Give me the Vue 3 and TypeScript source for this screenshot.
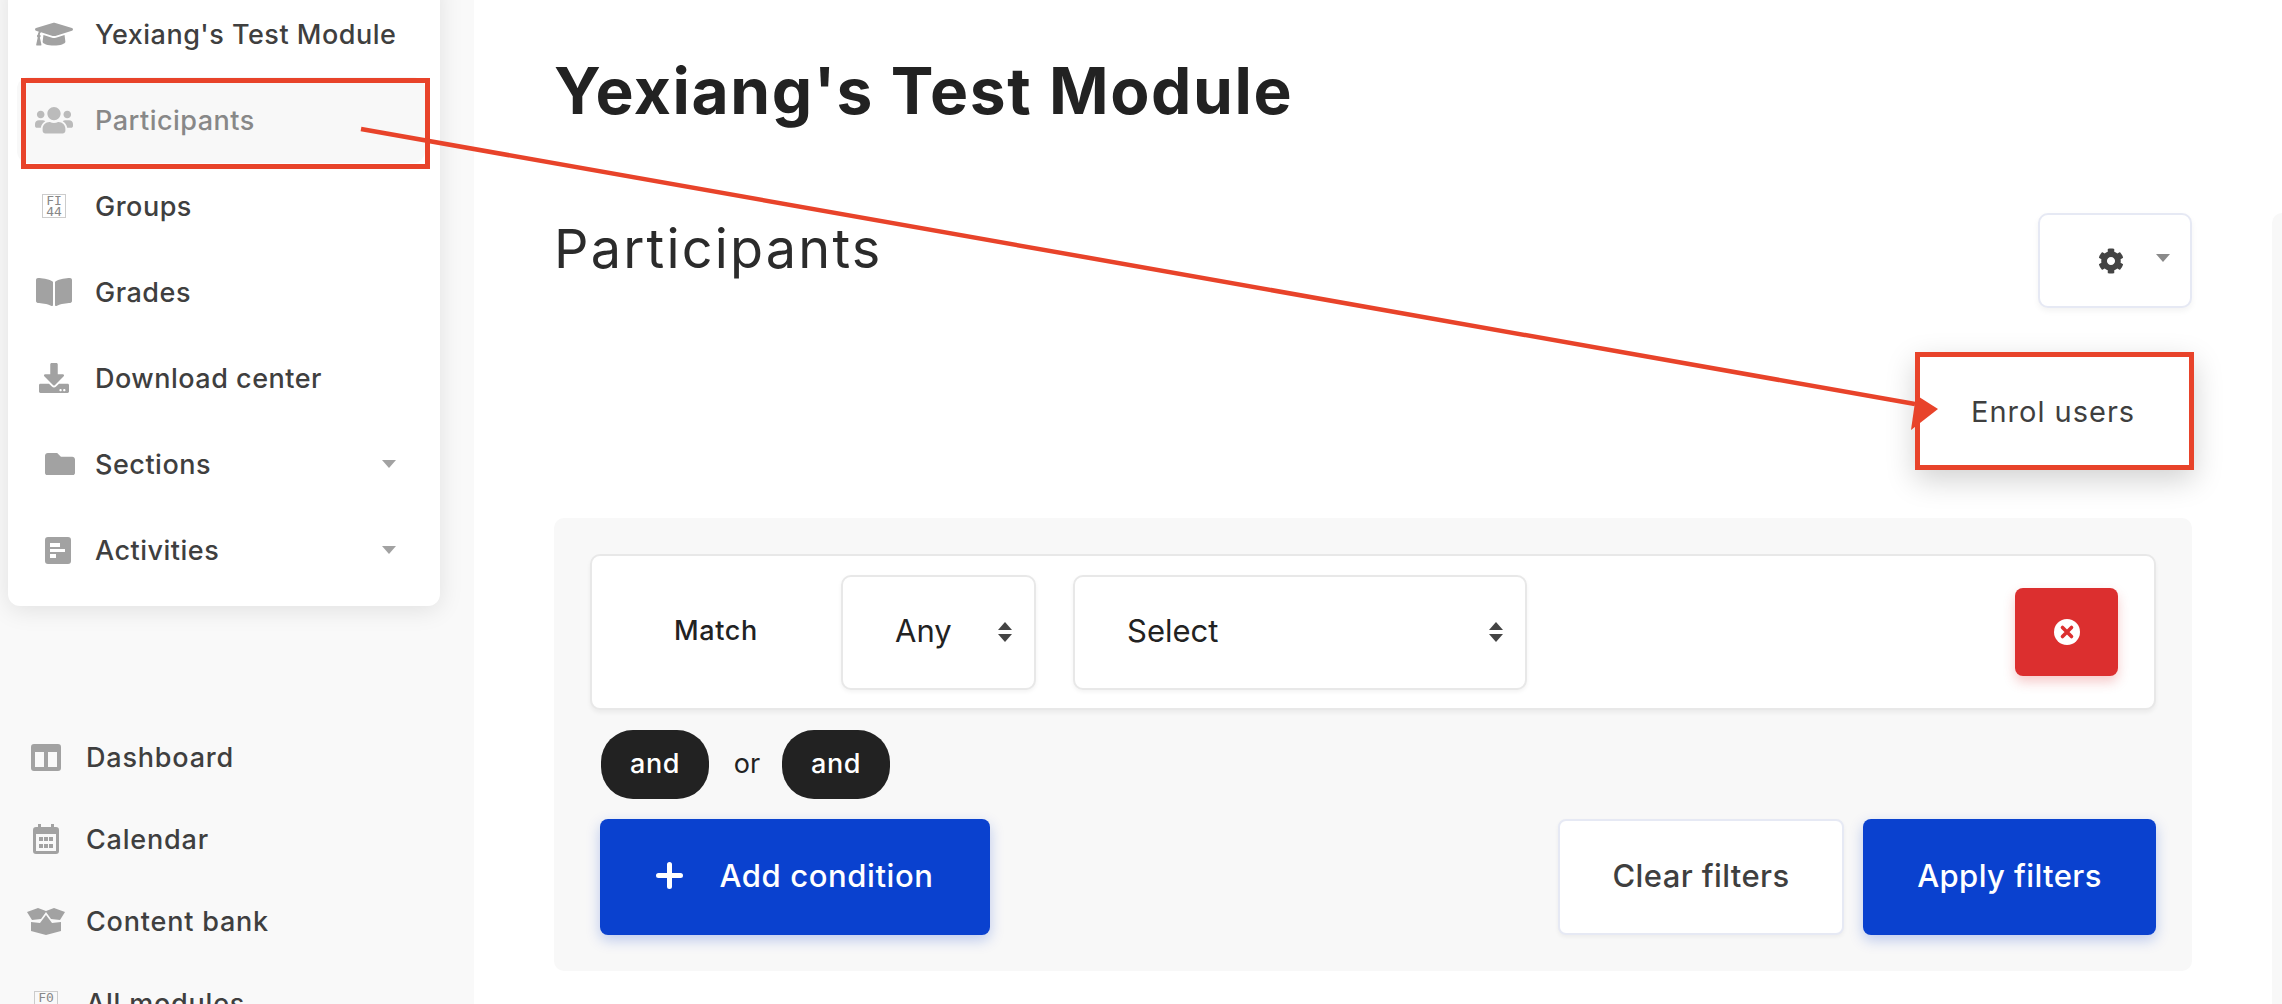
<script setup lang="ts">
interface IconDef { box: string; w: number; d: string }
interface NavItem { label: string; svg?: IconDef; tag?: string[]; offset?: boolean; caret?: boolean; active?: boolean }
const cap: IconDef = { box: '0 0 640 512', w: 38, d: 'M622.34 153.2L343.4 67.5c-15.2-4.67-31.6-4.67-46.79 0L17.66 153.2c-23.54 7.23-23.54 38.36 0 45.59l48.63 14.94c-10.67 13.19-17.23 29.28-17.88 46.9C38.78 266.15 32 276.11 32 288c0 10.78 5.68 19.85 13.86 25.65L20.33 428.53C18.11 438.52 25.71 448 35.94 448h56.11c10.24 0 17.84-9.48 15.62-19.47L82.14 313.65C90.32 307.85 96 298.78 96 288c0-11.57-6.47-21.25-15.66-26.87.76-15.02 8.44-28.3 20.69-36.72L296.6 284.5c9.06 2.78 26.44 6.25 46.79 0l278.95-85.7c23.55-7.24 23.55-38.36 0-45.6zM352.79 315.09c-28.53 8.76-52.84 3.92-65.59 0l-145.02-44.55L128 384c0 35.35 85.96 64 192 64s192-28.65 192-64l-14.18-113.47-145.03 44.56z' }
const users: IconDef = { box: '0 0 640 512', w: 38, d: 'M96 224c35.3 0 64-28.7 64-64s-28.7-64-64-64-64 28.7-64 64 28.7 64 64 64zm448 0c35.3 0 64-28.7 64-64s-28.7-64-64-64-64 28.7-64 64 28.7 64 64 64zm32 32h-64c-17.6 0-33.5 7.1-45.1 18.6 40.3 22.1 68.9 62 75.1 109.4h66c17.7 0 32-14.3 32-32v-32c0-35.3-28.7-64-64-64zm-256 0c61.9 0 112-50.1 112-112S381.9 32 320 32 208 82.1 208 144s50.1 112 112 112zm76.8 32h-8.3c-20.8 10-43.9 16-68.5 16s-47.6-6-68.5-16h-8.3C179.6 288 128 339.6 128 403.2V432c0 26.5 21.5 48 48 48h288c26.5 0 48-21.5 48-48v-28.8c0-63.6-51.6-115.2-115.2-115.2zm-223.7-13.4C161.5 263.1 145.6 256 128 256H64c-35.3 0-64 28.7-64 64v32c0 17.7 14.3 32 32 32h65.9c6.3-47.4 34.9-87.3 75.2-109.4z' }
const book: IconDef = { box: '0 0 576 512', w: 36, d: 'M542.22 32.05c-54.8 3.11-163.72 14.43-230.96 55.59-4.64 2.84-7.27 7.89-7.27 13.17v363.87c0 11.55 12.63 18.85 23.28 13.49 69.18-34.82 169.23-44.32 218.7-46.92 16.89-.89 30.02-14.43 30.02-30.66V62.75c.01-17.71-15.35-31.74-33.77-30.7zM264.73 87.64C197.5 46.48 88.58 35.17 33.78 32.05 15.36 31.01 0 45.04 0 62.75V400.6c0 16.24 13.13 29.78 30.02 30.66 49.49 2.6 149.59 12.11 218.77 46.95 10.62 5.35 23.21-1.94 23.21-13.46V100.63c0-5.29-2.62-10.25-7.27-12.99z' }
const download: IconDef = { box: '0 0 512 512', w: 30, d: 'M216 0h80c13.3 0 24 10.7 24 24v168h87.7c17.8 0 26.7 21.5 14.1 34.1L269.7 378.3c-7.5 7.5-19.8 7.5-27.3 0L90.1 226.1c-12.6-12.6-3.7-34.1 14.1-34.1H192V24c0-13.3 10.7-24 24-24zm296 376v112c0 13.3-10.7 24-24 24H24c-13.3 0-24-10.7-24-24V376c0-13.3 10.7-24 24-24h146.7l49 49c20.1 20.1 52.5 20.1 72.6 0l49-49H488c13.3 0 24 10.7 24 24zm-124 88c0-11-9-20-20-20s-20 9-20 20 9 20 20 20 20-9 20-20zm64 0c0-11-9-20-20-20s-20 9-20 20 9 20 20 20 20-9 20-20z' }
const folder: IconDef = { box: '0 64 512 384', w: 30, d: 'M464 128H272l-64-64H48C21.49 64 0 85.49 0 112v288c0 26.51 21.49 48 48 48h416c26.51 0 48-21.49 48-48V176c0-26.51-21.49-48-48-48z' }
const activity: IconDef = { box: '0 0 26 27', w: 26, d: 'M3 0h20a3 3 0 0 1 3 3v21a3 3 0 0 1-3 3H3a3 3 0 0 1-3-3V3a3 3 0 0 1 3-3zM5 6v4h10V6zM5 12v3h15v-3zM5 17v4h6v-4z' }
const dash: IconDef = { box: '0 0 30 27', w: 30, d: 'M3 0h24a3 3 0 0 1 3 3v21a3 3 0 0 1-3 3H3a3 3 0 0 1-3-3V3a3 3 0 0 1 3-3zM4 8v15h9V8zM17 8v15h9V8z' }
const calendar: IconDef = { box: '0 0 26 30', w: 26, d: 'M5 0h3v3h10V0h3v3h2a3 3 0 0 1 3 3v21a3 3 0 0 1-3 3H3a3 3 0 0 1-3-3V6a3 3 0 0 1 3-3h2zM3 10v17h20V10zM6 13h4v4H6zM11 13h4v4h-4zM16 13h4v4h-4zM6 20h4v4H6zM11 20h4v4h-4zM16 20h4v4h-4z' }
const bank: IconDef = { box: '0 0 38 27', w: 38, d: 'M0 4L11 0l8 3 8-3 11 4-5 8-9-1-5-7-5 7-9 1zM4 14l9 1 6-8 6 8 9-1v9l-15 4-15-4z' }

const topItems: NavItem[] = [
  { label: "Yexiang's Test Module", svg: cap },
  { label: 'Participants', svg: users, active: true },
  { label: 'Groups', tag: ['FI', '44'] },
  { label: 'Grades', svg: book },
  { label: 'Download center', svg: download },
  { label: 'Sections', svg: folder, offset: true, caret: true },
  { label: 'Activities', svg: activity, offset: true, caret: true },
]
const bottomItems: NavItem[] = [
  { label: 'Dashboard', svg: dash },
  { label: 'Calendar', svg: calendar },
  { label: 'Content bank', svg: bank },
  { label: 'All modules', tag: ['F0', '88'] },
]
const gear = 'M487.4 315.7l-42.6-24.6c4.3-23.2 4.3-47 0-70.2l42.6-24.6c4.9-2.8 7.1-8.6 5.5-14-11.1-35.6-30-67.8-54.7-94.6-3.8-4.1-10-5.1-14.8-2.3L380.8 110c-17.9-15.4-38.5-27.3-60.8-35.1V25.8c0-5.6-3.9-10.5-9.4-11.7-36.7-8.2-74.3-7.8-109.2 0-5.5 1.2-9.4 6.1-9.4 11.7V75c-22.2 7.9-42.8 19.8-60.8 35.1L88.7 85.5c-4.9-2.8-11-1.9-14.8 2.3-24.7 26.7-43.6 58.9-54.7 94.6-1.7 5.4.6 11.2 5.5 14L67.3 221c-4.3 23.2-4.3 47 0 70.2l-42.6 24.6c-4.9 2.8-7.1 8.6-5.5 14 11.1 35.6 30 67.8 54.7 94.6 3.8 4.1 10 5.1 14.8 2.3l42.6-24.6c17.9 15.4 38.5 27.3 60.8 35.1v49.2c0 5.6 3.9 10.5 9.4 11.7 36.7 8.2 74.3 7.8 109.2 0 5.5-1.2 9.4-6.1 9.4-11.7v-49.2c22.2-7.9 42.8-19.8 60.8-35.1l42.6 24.6c4.9 2.8 11 1.9 14.8-2.3 24.7-26.7 43.6-58.9 54.7-94.6 1.5-5.5-.7-11.3-5.6-14.1zM256 336c-44.1 0-80-35.9-80-80s35.9-80 80-80 80 35.9 80 80-35.9 80-80 80z'
</script>

<template>
  <div class="page">
    <aside class="sidebar">
      <nav class="card">
        <a v-for="it in topItems" :key="it.label" class="item" :class="{ active: it.active }">
          <span class="ico" :class="{ shift: it.offset }">
            <svg v-if="it.svg" :viewBox="it.svg.box" :width="it.svg.w" fill="currentColor" fill-rule="evenodd"><path :d="it.svg.d" /></svg>
            <span v-else class="tag"><b>{{ it.tag![0] }}</b><b>{{ it.tag![1] }}</b></span>
          </span>
          <span class="lbl">{{ it.label }}</span>
          <span v-if="it.caret" class="caret"></span>
        </a>
      </nav>
      <nav class="lower">
        <a v-for="it in bottomItems" :key="it.label" class="low">
          <span class="ico">
            <svg v-if="it.svg" :viewBox="it.svg.box" :width="it.svg.w" fill="currentColor" fill-rule="evenodd"><path :d="it.svg.d" /></svg>
            <span v-else class="tag"><b>{{ it.tag![0] }}</b><b>{{ it.tag![1] }}</b></span>
          </span>
          <span class="lbl">{{ it.label }}</span>
        </a>
      </nav>
    </aside>

    <main class="main">
      <h1>Yexiang's Test Module</h1>
      <div class="head">
        <h2>Participants</h2>
        <button class="gear-btn">
          <svg viewBox="0 0 512 512" width="26" height="26" fill="#444"><path :d="gear" /></svg>
          <span class="gear-caret"></span>
        </button>
        <div class="menu">Enrol users</div>
      </div>

      <section class="panel">
        <div class="row">
          <span class="match">Match</span>
          <div class="sel any">
            <span>Any</span>
            <svg class="updown" viewBox="0 0 14 20" width="14" height="20" fill="#444"><path d="M7 0l7 8H0zM0 12h14l-7 8z" /></svg>
          </div>
          <div class="sel pick">
            <span>Select</span>
            <svg class="updown" viewBox="0 0 14 20" width="14" height="20" fill="#444"><path d="M7 0l7 8H0zM0 12h14l-7 8z" /></svg>
          </div>
          <button class="del">
            <svg viewBox="0 0 26 26" width="26" height="26"><circle cx="13" cy="13" r="13" fill="#fff" /><path d="M8.5 8.5l9 9M17.5 8.5l-9 9" stroke="#dc2f2f" stroke-width="3.6" stroke-linecap="round" /></svg>
          </button>
        </div>
        <div class="joins">
          <span class="pill">and</span>
          <span class="or">or</span>
          <span class="pill">and</span>
        </div>
        <div class="actions">
          <button class="btn primary add">
            <svg viewBox="0 0 27 27" width="27" height="27"><path d="M13.5 2.5v22M2.5 13.5h22" stroke="#fff" stroke-width="5" stroke-linecap="round" /></svg>
            <span>Add condition</span>
          </button>
          <button class="btn ghost">Clear filters</button>
          <button class="btn primary apply">Apply filters</button>
        </div>
      </section>
    </main>

    <div class="rail"></div>

    <svg class="notes" viewBox="0 0 2282 1004" width="2282" height="1004">
      <rect x="23.5" y="80.5" width="404" height="86" fill="none" stroke="#e8432a" stroke-width="5" />
      <rect x="1917.5" y="354.5" width="274" height="113" fill="none" stroke="#e8432a" stroke-width="5" />
      <path d="M361 129L1915 404" stroke="#e8432a" stroke-width="4.5" />
      <path d="M1938 409L1911 430L1916 395Z" fill="#e8432a" />
    </svg>
  </div>
</template>

<style>
html, body { margin: 0; background: #fff; }
</style>

<style scoped>
.page { position: relative; display: flex; width: 2282px; height: 1004px; overflow: hidden; background: #fff; font-family: Inter, "Liberation Sans", sans-serif; color: #3f3f3f; }
.sidebar { flex: 0 0 474px; background: #f9f9f9; display: flex; flex-direction: column; }
.card { margin: -20px 34px 0 8px; padding: 11px 15px 13px 9px; background: #fff; border-radius: 0 0 12px 12px; box-shadow: 0 4px 24px rgba(0,0,0,.1); }
.item { display: flex; align-items: center; height: 86px; border-radius: 12px; padding-left: 18px; }
.item.active { background: #f8f8f8; color: #888; }
.item.active .ico { color: #bbb; }
.ico { flex: 0 0 38px; min-width: 0; display: flex; justify-content: center; align-items: center; color: #a2a2a2; }
.ico svg { display: block; flex: none; }
.ico.shift { justify-content: flex-start; padding-left: 10px; box-sizing: border-box; }
.lbl { margin-left: 22px; padding-top: 1px; font-size: 27px; font-weight: 500; letter-spacing: .5px; white-space: nowrap; }
.caret { margin-left: auto; margin-right: 29px; border: 7px solid transparent; border-top: 8px solid #a2a2a2; border-bottom: 0; }
.tag { display: flex; flex-direction: column; align-items: center; justify-content: center; flex: none; width: 24px; height: 24px; box-sizing: border-box; border: 1px solid #ccc; font-family: "DejaVu Sans Mono", monospace; font-size: 13px; line-height: 11px; color: #888; overflow: hidden; }
.tag b { font-weight: 400; }
.lower { margin-top: 110px; padding-left: 27px; }
.low { display: flex; align-items: center; height: 82px; }
.low .lbl { margin-left: 21px; letter-spacing: .8px; }
.main { flex: 1; min-width: 0; padding: 0 90px 0 80px; }
h1 { margin: 55px 0 0; font-size: 64px; line-height: 72px; font-weight: 700; color: #222; letter-spacing: 1.6px; }
.head { position: relative; display: flex; justify-content: space-between; align-items: flex-start; margin-top: 86px; }
h2 { margin: 8px 0 0; font-size: 54px; line-height: 56px; font-weight: 400; color: #2b2b2b; letter-spacing: 2.2px; }
.gear-btn { display: flex; align-items: center; justify-content: flex-end; gap: 32px; width: 154px; height: 95px; box-sizing: border-box; padding: 0 20px 0 0; background: #fff; border: 2px solid #e6e9f4; border-radius: 10px; box-shadow: 0 3px 6px rgba(0,0,0,.05); }
.gear-caret { border: 7px solid transparent; border-top: 8px solid #8a8a8a; border-bottom: 0; margin-top: -6px; }
.menu { position: absolute; right: -2px; top: 139px; width: 279px; height: 118px; box-sizing: border-box; padding-left: 56px; display: flex; align-items: center; background: #fff; font-size: 29px; font-weight: 400; letter-spacing: 1px; box-shadow: 0 10px 28px rgba(0,0,0,.18); }
.panel { margin-top: 210px; height: 453px; box-sizing: border-box; padding: 36px 36px 0; background: #f8f8f8; border-radius: 10px; }
.row { display: flex; align-items: center; height: 156px; box-sizing: border-box; padding-left: 82px; background: #fff; border: 2px solid #e8e8e8; border-radius: 10px; box-shadow: 0 3px 4px rgba(0,0,0,.05); }
.match { width: 167px; padding-bottom: 4px; font-size: 27px; font-weight: 500; letter-spacing: .6px; color: #222; }
.sel { display: flex; align-items: center; justify-content: space-between; height: 115px; box-sizing: border-box; padding: 0 22px 0 52px; background: #fff; border: 2px solid #e8e8e8; border-radius: 10px; box-shadow: 0 2px 4px rgba(0,0,0,.05); font-size: 31px; color: #222; }
.sel span { padding-bottom: 4px; }
.any { width: 195px; margin-right: 37px; }
.pick { width: 454px; }
.del { margin-left: auto; margin-right: 36px; display: flex; align-items: center; justify-content: center; width: 103px; height: 88px; padding: 0; border: 0; background: #dc2f2f; border-radius: 8px; box-shadow: 0 6px 12px rgba(220,47,47,.25); }
.joins { display: flex; align-items: center; height: 69px; margin: 20px 0 0 11px; }
.pill { width: 108px; height: 69px; padding-bottom: 3px; box-sizing: border-box; display: flex; align-items: center; justify-content: center; background: #222; color: #fff; border-radius: 32px; font-size: 27px; font-weight: 500; letter-spacing: .5px; }
.or { width: 73px; padding-bottom: 3px; padding-left: 3px; box-sizing: border-box; text-align: center; font-size: 27px; color: #222; }
.actions { display: flex; align-items: stretch; margin: 20px 0 0 10px; height: 116px; }
.btn { display: flex; align-items: center; justify-content: center; border-radius: 8px; font: 500 31px Inter, "Liberation Sans", sans-serif; letter-spacing: .4px; box-sizing: border-box; padding: 0 0 4px; }
.primary { background: #0a41cf; color: #fff; border: 0; box-shadow: 0 5px 14px rgba(10,65,207,.25); }
.add { width: 390px; gap: 36px; margin-right: auto; letter-spacing: .6px; }
.ghost { width: 286px; background: #fff; color: #3f3f3f; border: 2px solid #e6e9f4; box-shadow: 0 2px 4px rgba(0,0,0,.05); margin-right: 19px; }
.apply { width: 293px; }
.rail { position: absolute; left: 2272px; top: 213px; right: 0; bottom: 0; background: #f8f8f8; border-radius: 10px 0 0 0; }
.notes { position: absolute; left: 0; top: 0; pointer-events: none; }
</style>
